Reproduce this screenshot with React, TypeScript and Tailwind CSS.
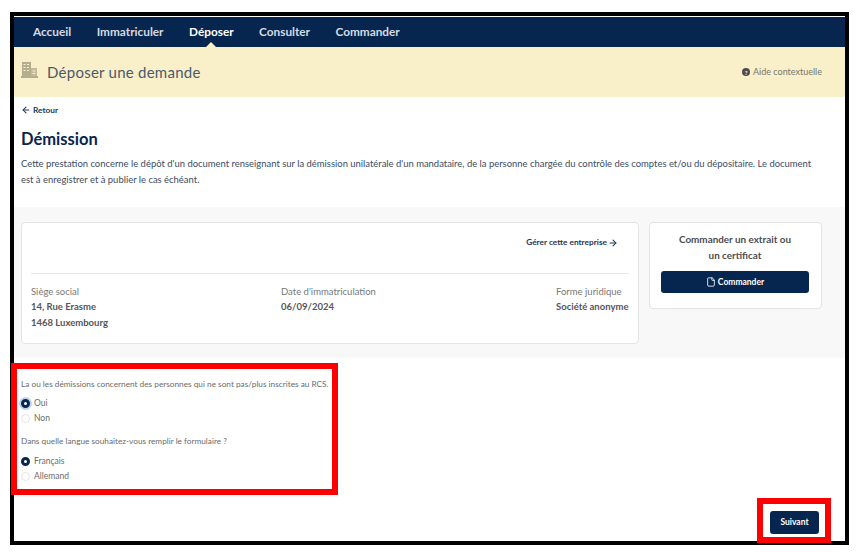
import { ArrowLeft, ArrowRight, File } from "lucide-react";

const navItems = ["Accueil", "Immatriculer", "Déposer", "Consulter", "Commander"];

function BuildingIcon() {
  return (
    <svg width="17" height="17" viewBox="0 0 17 17" fill="#b5ad90" className="shrink-0 -mt-[3px]">
      <path d="M1 0h9v14H1z" />
      <path d="M10 6h6v8h-6z" opacity="0.8" />
      <path d="M0 14h17v2H0z" />
      <path
        d="M2.500 2h2v1h-2zM6 2h2v1H6zM2.500 5h2v1h-2zM6 5h2v1H6zM2.500 8h2v1h-2zM6 8h2v1H6zM11.500 8.500h3v1h-3zM11.500 11h3v1h-3z"
        fill="#f9efc9"
      />
    </svg>
  );
}

function Radio({ label, checked, focus }: { label: string; checked?: boolean; focus?: boolean }) {
  return (
    <div className="flex items-center h-[15px] gap-[4px]">
      <span
        className={
          checked
            ? focus
              ? "w-[9px] h-[9px] rounded-full border-[3px] border-[#07264f] bg-white shadow-[0_0_0_2px_#bfd4f2]"
              : "w-[9px] h-[9px] rounded-full border-[3px] border-[#07264f] bg-white"
            : "w-[9px] h-[9px] rounded-full border border-[#e3e3e3] bg-white"
        }
      />
      <span className="text-[8.500px] text-[#6b6b6b]">{label}</span>
    </div>
  );
}

function Info({ label, lines, className }: { label: string; lines: string[]; className?: string }) {
  return (
    <div className={className}>
      <div className="text-[9.500px] leading-[15px] text-[#77777a]">{label}</div>
      {lines.map((l) => (
        <div key={l} className="text-[9.500px] leading-[16px] font-bold text-[#55555a] whitespace-nowrap">
          {l}
        </div>
      ))}
    </div>
  );
}

export default function App() {
  return (
    <div className="relative w-[862px] h-[555px] bg-white overflow-hidden pl-[10px] pt-[12px] font-['Lato',sans-serif]">
      <div className="w-[839px] h-[533px] border-4 border-black bg-white pt-px flex flex-col overflow-hidden">
        {/* nav */}
        <nav className="h-[30px] shrink-0 bg-[#07264f] flex items-center pl-[19px] gap-[25.500px] text-[11.800px] font-bold text-[#d5dbe4]">
          {navItems.map((n) => (
            <div key={n} className={n === "Déposer" ? "relative text-white h-full flex items-center" : "h-full flex items-center"}>
              {n}
              {n === "Déposer" && (
                <span className="absolute bottom-0 left-1/2 -ml-[5px] border-x-[5px] border-x-transparent border-b-[5px] border-b-[#f9efc9]" />
              )}
            </div>
          ))}
        </nav>

        {/* bandeau */}
        <div className="h-[50px] shrink-0 bg-[#f9efc9] flex items-center justify-between pl-[7px] pr-[23px]">
          <div className="flex items-center gap-[9px]">
            <BuildingIcon />
            <span className="text-[15px] text-[#4a5a6b] tracking-[0.25px]">Déposer une demande</span>
          </div>
          <div className="flex items-center gap-[3px] text-[9px] text-[#77776f]">
            <span className="w-[8px] h-[8px] rounded-full bg-[#4c4c4c] text-white text-[6px] font-bold flex items-center justify-center">?</span>
            Aide contextuelle
          </div>
        </div>

        {/* entete */}
        <div className="h-[110px] shrink-0 px-[7px]">
          <div className="flex items-center gap-[2px] mt-[7px] h-[12px] text-[8.300px] font-bold text-[#1e3556]">
            <ArrowLeft size={10} strokeWidth={2.5} />
            Retour
          </div>
          <h1 className="mt-[12px] text-[16.500px] leading-[22px] font-bold text-[#07264f]">Démission</h1>
          <p className="mt-[5.500px] text-[9.450px] leading-[16.500px] text-[#3b4b63] w-[800px]">
            Cette prestation concerne le dépôt d'un document renseignant sur la démission unilatérale d'un mandataire, de la personne chargée du contrôle des comptes et/ou du dépositaire. Le document est à enregistrer et à publier le cas échéant.
          </p>
        </div>

        {/* entreprise */}
        <div className="h-[151px] shrink-0 bg-[#f8f8f8] flex items-start gap-[10px] px-[7px] pt-[15px]">
          <div className="w-[618px] h-[122px] bg-white border border-[#e4e4e4] rounded-[4px] px-[9px] flex flex-col">
            <div className="h-[51px] shrink-0 border-b border-[#e8e8e8] flex justify-end pt-[13px] pr-[11px] text-[8.300px] font-bold text-[#1e3556]">
              <span className="flex items-center gap-[1px] h-[13px]">
                Gérer cette entreprise
                <ArrowRight size={10} strokeWidth={2.5} />
              </span>
            </div>
            <div className="flex pt-[10px]">
              <Info label="Siège social" lines={["14, Rue Erasme", "1468 Luxembourg"]} className="w-[250px]" />
              <Info label="Date d'immatriculation" lines={["06/09/2024"]} className="w-[275px]" />
              <Info label="Forme juridique" lines={["Société anonyme"]} />
            </div>
          </div>
          <div className="w-[173px] h-[87px] bg-white border border-[#e4e4e4] rounded-[4px] pl-[11px] pr-[12px] pt-[8px] flex flex-col items-center">
            <div className="text-[9.900px] leading-[16px] font-bold text-[#4c4c50] text-center">
              Commander un extrait ou
              <br />
              un certificat
            </div>
            <button className="mt-[8px] w-full h-[22px] rounded-[3px] bg-[#07264f] text-white text-[8.500px] font-bold flex items-center justify-center gap-[2px]">
              <File size={10} />
              Commander
            </button>
          </div>
        </div>

        {/* formulaire */}
        <div className="px-[7px] pt-[20px] flex-1 flex flex-col">
          <div className="text-[8.250px] leading-[13px] text-[#6b6b6b]">
            La ou les démissions concernent des personnes qui ne sont pas/plus inscrites au RCS.
          </div>
          <div className="mt-[5px]">
            <Radio label="Oui" checked focus />
            <Radio label="Non" />
          </div>
          <div className="mt-[9px] text-[8.250px] leading-[13px] text-[#6b6b6b]">
            Dans quelle langue souhaitez-vous remplir le formulaire ?
          </div>
          <div className="mt-[6px]">
            <Radio label="Français" checked />
            <Radio label="Allemand" />
          </div>
          <div className="flex justify-end mt-[27px] pr-[19px]">
            <button className="w-[49px] h-[23px] rounded-[3px] bg-[#07264f] text-white text-[8.500px] font-bold">
              Suivant
            </button>
          </div>
        </div>
      </div>

      {/* cadres rouges d'annotation */}
      <div className="absolute left-[11px] top-[363px] w-[327px] h-[132px] border-[6px] border-[#ff0000]" />
      <div className="absolute left-[757px] top-[498px] w-[74px] h-[45px] border-[6px] border-[#ff0000]" />
    </div>
  );
}
